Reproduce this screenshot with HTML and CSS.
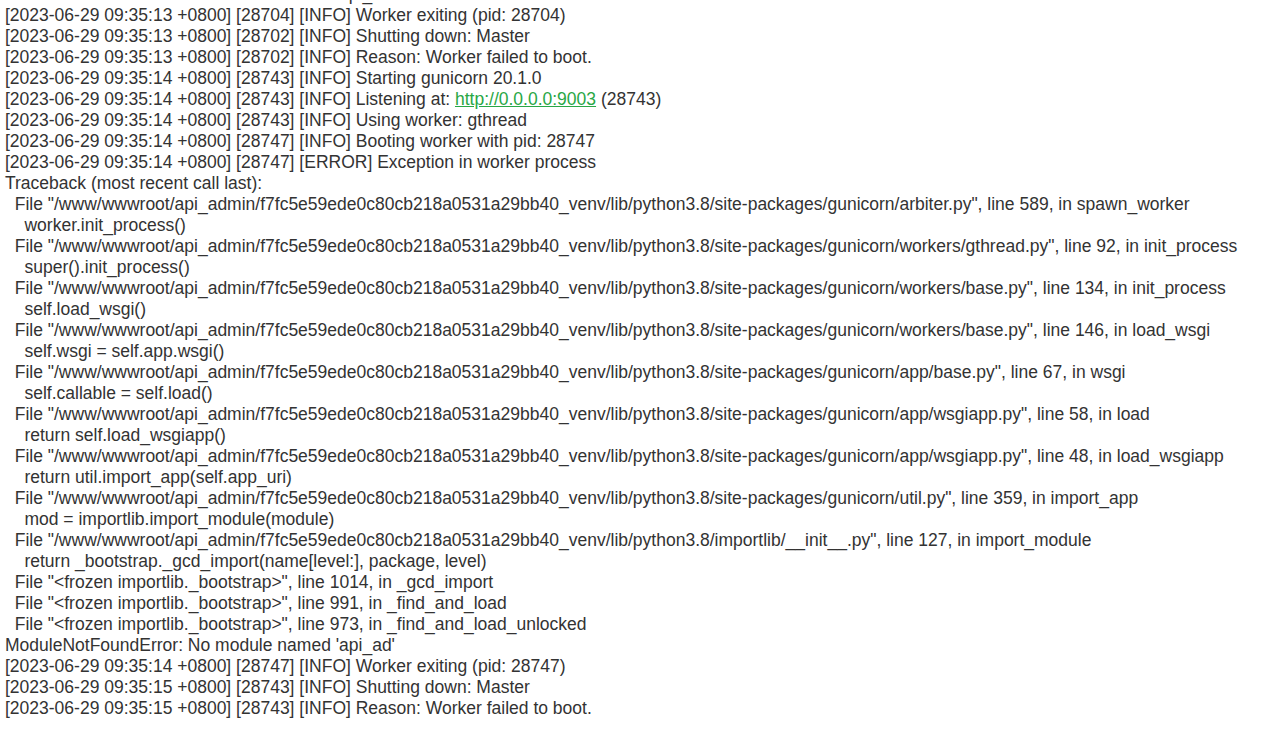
FILE: index.html
```html
<!DOCTYPE html>
<html lang="en">
<head>
  <meta charset="UTF-8" />
  <title>gunicorn log</title>
  <link rel="stylesheet" href="styles.css">
</head>
<body>
  <div class="log">ModuleNotFoundError: No module named 'api_ad'
[2023-06-29 09:35:13 +0800] [28704] [INFO] Worker exiting (pid: 28704)
[2023-06-29 09:35:13 +0800] [28702] [INFO] Shutting down: Master
[2023-06-29 09:35:13 +0800] [28702] [INFO] Reason: Worker failed to boot.
[2023-06-29 09:35:14 +0800] [28743] [INFO] Starting gunicorn 20.1.0
[2023-06-29 09:35:14 +0800] [28743] [INFO] Listening at: <a href="http://0.0.0.0:9003">http://0.0.0.0:9003</a> (28743)
[2023-06-29 09:35:14 +0800] [28743] [INFO] Using worker: gthread
[2023-06-29 09:35:14 +0800] [28747] [INFO] Booting worker with pid: 28747
[2023-06-29 09:35:14 +0800] [28747] [ERROR] Exception in worker process
Traceback (most recent call last):
  File "/www/wwwroot/api_admin/f7fc5e59ede0c80cb218a0531a29bb40_venv/lib/python3.8/site-packages/gunicorn/arbiter.py", line 589, in spawn_worker
    worker.init_process()
  File "/www/wwwroot/api_admin/f7fc5e59ede0c80cb218a0531a29bb40_venv/lib/python3.8/site-packages/gunicorn/workers/gthread.py", line 92, in init_process
    super().init_process()
  File "/www/wwwroot/api_admin/f7fc5e59ede0c80cb218a0531a29bb40_venv/lib/python3.8/site-packages/gunicorn/workers/base.py", line 134, in init_process
    self.load_wsgi()
  File "/www/wwwroot/api_admin/f7fc5e59ede0c80cb218a0531a29bb40_venv/lib/python3.8/site-packages/gunicorn/workers/base.py", line 146, in load_wsgi
    self.wsgi = self.app.wsgi()
  File "/www/wwwroot/api_admin/f7fc5e59ede0c80cb218a0531a29bb40_venv/lib/python3.8/site-packages/gunicorn/app/base.py", line 67, in wsgi
    self.callable = self.load()
  File "/www/wwwroot/api_admin/f7fc5e59ede0c80cb218a0531a29bb40_venv/lib/python3.8/site-packages/gunicorn/app/wsgiapp.py", line 58, in load
    return self.load_wsgiapp()
  File "/www/wwwroot/api_admin/f7fc5e59ede0c80cb218a0531a29bb40_venv/lib/python3.8/site-packages/gunicorn/app/wsgiapp.py", line 48, in load_wsgiapp
    return util.import_app(self.app_uri)
  File "/www/wwwroot/api_admin/f7fc5e59ede0c80cb218a0531a29bb40_venv/lib/python3.8/site-packages/gunicorn/util.py", line 359, in import_app
    mod = importlib.import_module(module)
  File "/www/wwwroot/api_admin/f7fc5e59ede0c80cb218a0531a29bb40_venv/lib/python3.8/importlib/__init__.py", line 127, in import_module
    return _bootstrap._gcd_import(name[level:], package, level)
  File "&lt;frozen importlib._bootstrap&gt;", line 1014, in _gcd_import
  File "&lt;frozen importlib._bootstrap&gt;", line 991, in _find_and_load
  File "&lt;frozen importlib._bootstrap&gt;", line 973, in _find_and_load_unlocked
ModuleNotFoundError: No module named 'api_ad'
[2023-06-29 09:35:14 +0800] [28747] [INFO] Worker exiting (pid: 28747)
[2023-06-29 09:35:15 +0800] [28743] [INFO] Shutting down: Master
[2023-06-29 09:35:15 +0800] [28743] [INFO] Reason: Worker failed to boot.</div>
</body>
</html>
```

FILE: styles.css
```css
html {
  overflow: hidden;
}
body {
  background: #fff;
  color: #333;
  font-family: "Liberation Sans", Arial, sans-serif;
  font-size: 17.5px;
  margin: 0;
}
.log {
  white-space: pre;
  line-height: 21px;
  padding-left: 5px;
  margin-top: -16px;
}
.log a {
  color: #28a745;
  text-decoration: underline;
}
```
